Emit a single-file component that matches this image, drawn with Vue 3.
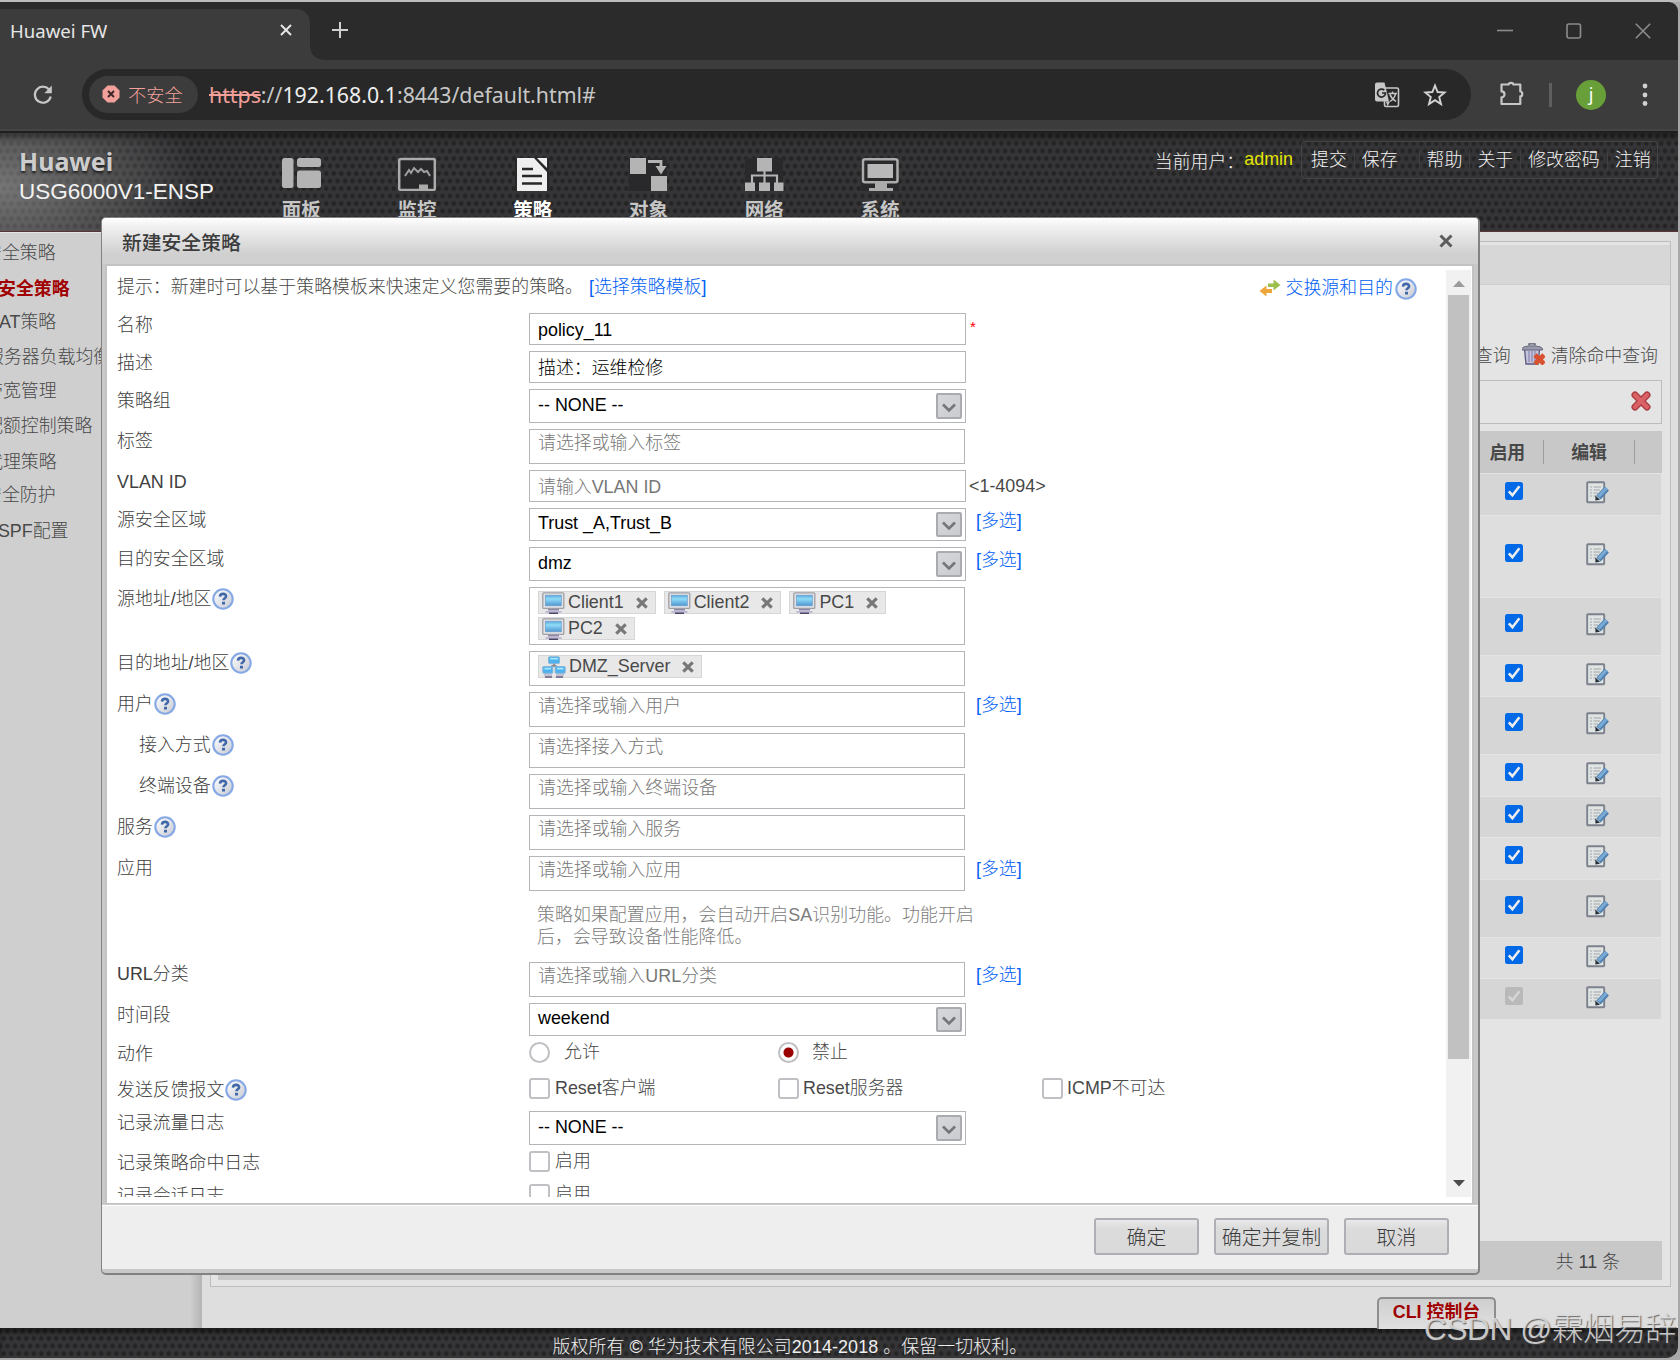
<script setup>
const nav = ['面板', '监控', '策略', '对象', '网络', '系统']
const side = [
  { t: '安全策略', y: 253, x: -16 },
  { t: '安全策略', y: 289, x: -2, on: true },
  { t: 'NAT策略', y: 322, x: -14 },
  { t: '服务器负载均衡', y: 357, x: -14 },
  { t: '带宽管理', y: 391, x: -15 },
  { t: '配额控制策略', y: 426, x: -15 },
  { t: '代理策略', y: 462, x: -15 },
  { t: '安全防护', y: 495, x: -16 },
  { t: 'OSPF配置', y: 531, x: -16 },
].map((s, i, a) => ({ ...s, h: i + 1 < a.length ? a[i + 1].y - s.y : 36 }))
const tableRows = [41, 81, 57, 40, 57, 41, 40, 41, 57, 40, 40]
const rows = [
  { l: '名称', h: 32, k: 'input', v: 'policy_11', star: true },
  { l: '描述', h: 32, k: 'input', v: '描述：运维检修' },
  { l: '策略组', h: 34, k: 'select', v: '-- NONE --' },
  { l: '标签', h: 35, k: 'box', p: '请选择或输入标签' },
  { l: 'VLAN ID', h: 32, k: 'input', p: '请输入VLAN ID', range: '<1-4094>' },
  { l: '源安全区域', h: 33, k: 'select', v: 'Trust _A,Trust_B', multi: true },
  { l: '目的安全区域', h: 34, k: 'select', v: 'dmz', multi: true },
  { l: '源地址/地区', h: 58, k: 'box', q: true, tags: ['Client1', 'Client2', 'PC1', 'PC2'] },
  { l: '目的地址/地区', h: 35, k: 'box', q: true, tags: ['DMZ_Server'] },
  { l: '用户', h: 35, k: 'box', q: true, p: '请选择或输入用户', multi: true },
  { l: '接入方式', h: 35, k: 'box', q: true, sub: true, p: '请选择接入方式' },
  { l: '终端设备', h: 35, k: 'box', q: true, sub: true, p: '请选择或输入终端设备' },
  { l: '服务', h: 35, k: 'box', q: true, p: '请选择或输入服务' },
  { l: '应用', h: 35, k: 'box', p: '请选择或输入应用', multi: true },
  { l: '', h: 59, k: 'note', v: '策略如果配置应用，会自动开启SA识别功能。功能开启后，会导致设备性能降低。' },
  { l: 'URL分类', h: 35, k: 'box', p: '请选择或输入URL分类', multi: true },
  { l: '时间段', h: 33, k: 'select', v: 'weekend' },
  { l: '动作', h: 30, k: 'radio', o: ['允许', '禁止'] },
  { l: '发送反馈报文', h: 27, k: 'check', q: true, o: ['Reset客户端', 'Reset服务器', 'ICMP不可达'] },
  { l: '记录流量日志', h: 34, k: 'select', v: '-- NONE --' },
  { l: '记录策略命中日志', h: 27, k: 'check', o: ['启用'] },
  { l: '记录会话日志', h: 27, k: 'check', o: ['启用'] },
]
</script>

<template>
  <div class="screen">
    <svg class="defs" width="0" height="0">
      <defs>
        <linearGradient id="gHelp" x1="0" y1="0" x2="1" y2="1">
          <stop offset="0" stop-color="#fff" /><stop offset=".5" stop-color="#e3e5ea" /><stop offset="1" stop-color="#c4c7ce" />
        </linearGradient>
        <linearGradient id="gScr" x1="0" y1="0" x2="0" y2="1">
          <stop offset="0" stop-color="#5aa7dc" /><stop offset=".35" stop-color="#8fdcf8" /><stop offset="1" stop-color="#4f95d2" />
        </linearGradient>
        <symbol id="help" viewBox="0 0 22 22">
          <circle cx="11" cy="11" r="9.700" fill="url(#gHelp)" stroke="#86a9e6" stroke-width="2.100" />
          <path d="M8 8.600c.1-2 1.400-2.700 3.100-2.700 1.800 0 3 .8 3 2.300 0 2-2.600 2-2.700 4.100" fill="none" stroke="#4068a8" stroke-width="2.600" />
          <rect x="10" y="13.800" width="3" height="2.700" fill="#4068a8" />
        </symbol>
        <symbol id="pc" viewBox="0 0 23 22">
          <rect x=".8" y=".8" width="21" height="15.600" rx="1" fill="#e4e4e8" stroke="#a0a0a4" stroke-width="1.300" />
          <rect x="3.300" y="3.200" width="16" height="10.600" fill="url(#gScr)" stroke="#6f9fc8" stroke-width=".7" />
          <path d="M6 17h11v1.500H6z" fill="#8f86ab" /><path d="M3.500 19h16v1.800h-16z" fill="#bcb6d2" /><path d="M7 20.500h9V22H7z" fill="#4b4566" />
        </symbol>
        <symbol id="net" viewBox="0 0 24 22">
          <path d="M12 7v4M5 13l7-4 7 4" stroke="#8a8a95" stroke-width="1.600" fill="none" />
          <rect x="6.500" y=".8" width="11" height="6.800" rx="1" fill="#4fb2ee" stroke="#86b4d6" />
          <rect x=".8" y="10.500" width="10" height="6.800" rx="1" fill="#4fb2ee" stroke="#86b4d6" />
          <rect x="13.200" y="10.500" width="10" height="6.800" rx="1" fill="#4fb2ee" stroke="#86b4d6" />
          <path d="M8 2.800h8M2.500 12.600h6.500M15 12.600h6.500" stroke="#a5e6ff" stroke-width="1.600" />
          <path d="M2 19h8M14 19h8" stroke="#b8b3cd" stroke-width="1.600" /><path d="M3 21h7M14 21h7" stroke="#615b80" stroke-width="1.300" />
        </symbol>
        <symbol id="edit" viewBox="0 0 23 23">
          <rect x="1.200" y="1.200" width="17" height="20" rx=".8" fill="#e0e4e2" stroke="#7c818c" stroke-width="1.900" />
          <path d="M4 6h2M4 9h2M4 12h2M4 15h2M7.500 6H15M7.500 9H14M7.500 12H12M7.500 15H10" stroke="#a3a6ad" stroke-width="1.100" />
          <path d="M12.500 16.500 20.800 7.500" stroke="#5080ae" stroke-width="5.800" />
          <path d="M12.700 15.500 20.500 7" stroke="#79a9d5" stroke-width="3.200" />
          <path d="M9.400 19.600v-5l4.600 4.200z" fill="#27303d" />
        </symbol>
      </defs>
    </svg>

    <div class="strip"></div>
    <div class="tabbar">
      <div class="tab"><span>Huawei FW</span>
        <svg width="14" height="14" viewBox="0 0 14 14"><path d="M2 2l10 10M12 2 2 12" stroke="#e6e6e6" stroke-width="2" /></svg>
      </div>
      <svg class="curve" width="16" height="16" viewBox="0 0 16 16"><path d="M0 0Q0 16 16 16H0z" fill="#3c3c3c" /></svg>
      <svg class="plus" width="16" height="16" viewBox="0 0 16 16"><path d="M8 0v16M0 8h16" stroke="#d0d0d0" stroke-width="2" /></svg>
      <div class="winbtns">
        <svg width="16" height="16" viewBox="0 0 16 16"><path d="M0 7.500h16" stroke="#8c8c8c" stroke-width="1.600" /></svg>
        <svg width="16" height="16" viewBox="0 0 16 16"><rect x="1" y="1" width="13.500" height="14" rx="2" fill="none" stroke="#8c8c8c" stroke-width="1.600" /></svg>
        <svg width="16" height="16" viewBox="0 0 16 16"><path d="M.8.8l14.400 14.400M15.200.8.8 15.200" stroke="#8c8c8c" stroke-width="1.600" /></svg>
      </div>
    </div>
    <div class="toolbar">
      <svg class="reload" width="20" height="20" viewBox="0 0 20 20"><path d="M16.500 5.200A8 8 0 1 0 17.700 11.500" fill="none" stroke="#c7c7c7" stroke-width="2.200" /><path d="M18.800.6v7.600h-7.400z" fill="#c7c7c7" /></svg>
      <div class="omni">
        <div class="chip">
          <svg width="18" height="18" viewBox="0 0 18 18"><path d="M5.500.5h7l5 5v7l-5 5h-7l-5-5v-7z" fill="#f2a09a" /><path d="M6 6l6 6M12 6l-6 6" stroke="#3a2626" stroke-width="1.900" /></svg>
          <span>不安全</span>
        </div>
        <div class="url"><s>https</s>://<b>192.168.0.1</b>:8443/default.html#</div>
        <svg class="trans" width="26" height="26" viewBox="0 0 26 26">
          <rect x="10.500" y="6" width="14" height="18.500" rx="1.500" fill="none" stroke="#c7c7c7" stroke-width="1.600" />
          <path d="M3 .6h7.500l4.500 19H3a2 2 0 0 1-2-2v-15a2 2 0 0 1 2-2z" fill="#c7c7c7" /><path d="M12 19.600h4l-2.500 5z" fill="#c7c7c7" />
          <path d="M10.300 8.200A4 4 0 1 0 11.500 11H8" fill="none" stroke="#282828" stroke-width="1.700" />
          <path d="M14.500 11.500h8.500M18.500 9.500v2M21.500 11.800c-.8 3.500-3 6-5.500 7.700M16 12.500c1 3 3 5 6 6.800" fill="none" stroke="#c7c7c7" stroke-width="1.500" />
        </svg>
        <svg class="star" width="24" height="24" viewBox="0 0 24 24"><path d="M12 2.500l2.600 6.500 7 .5-5.400 4.500 1.800 7-6-3.900-6 3.900 1.800-7L2.400 9.500l7-.5z" fill="none" stroke="#d2d2d2" stroke-width="1.900" /></svg>
      </div>
      <svg class="ext" width="26" height="26" viewBox="0 0 26 26"><path d="M3 4.500h6.700a2.300 1.700 0 0 1 4.600 0h7v7a1.900 2.300 0 0 1 0 4.800v7.700H2.500v-6.600a3 3 0 0 0 0-6V4.500z" fill="none" stroke="#c7c7c7" stroke-width="2.200" stroke-linejoin="round" /></svg>
      <i class="vline"></i>
      <div class="avatar">j</div>
      <svg class="dots" width="6" height="24" viewBox="0 0 6 24"><circle cx="3" cy="3" r="2.400" fill="#d0d0d0" /><circle cx="3" cy="12" r="2.400" fill="#d0d0d0" /><circle cx="3" cy="20.500" r="2.400" fill="#d0d0d0" /></svg>
    </div>

    <div class="page">
      <header class="head mesh">
        <div class="brand"><b>Huawei</b><span>USG6000V1-ENSP</span></div>
        <nav class="nav">
          <div v-for="(n, i) in nav" :key="n" class="navitem" :class="{ on: i === 2 }">
            <svg width="40" height="34" viewBox="0 0 40 34">
              <g v-if="i === 0" fill="#b4b4b4"><rect x="1" y="1" width="11.500" height="30" rx="2.500" /><rect x="16" y="1" width="24" height="9" rx="2.500" /><rect x="16" y="13.500" width="24" height="17.500" rx="2.500" /></g>
              <g v-else-if="i === 1"><rect x="2.200" y="2" width="35.600" height="31" rx="1.500" fill="#28282a" stroke="#ababab" stroke-width="2.500" /><path d="M8 19l4-6 2 3 3-5 4 4 3-3 3 3 3-1 3 5" fill="none" stroke="#9e9e9e" stroke-width="2" /><rect x="22" y="27.500" width="9" height="6" fill="#ababab" /></g>
              <g v-else-if="i === 2"><rect x="3" y="1" width="34" height="33" fill="#28282a" /><path d="M5 1h17l13 14v19H5z" fill="#efefef" /><path d="M25 1h10v10z" fill="#efefef" /><path d="M10 12h11M10 19h20M10 26.500h20" stroke="#28282a" stroke-width="2.600" /></g>
              <g v-else-if="i === 3"><rect x="1" y="1" width="38" height="33" fill="#29292b" /><rect x="2" y="1" width="16" height="16" fill="#b4b4b4" /><rect x="23" y="19" width="16" height="15" fill="#b4b4b4" /><path d="M20 4.500h13v6" fill="none" stroke="#b4b4b4" stroke-width="2.800" /><path d="M27.500 9h11l-5.500 8.500z" fill="#b4b4b4" /></g>
              <g v-else-if="i === 4"><rect x="1" y="1" width="38" height="33" fill="#29292b" /><g fill="#b4b4b4"><rect x="13" y="1" width="15" height="13.500" /><rect x="1" y="25.500" width="10" height="8.500" /><rect x="15" y="25.500" width="11" height="8.500" /><rect x="30" y="25.500" width="9.500" height="8.500" /></g><path d="M20.500 14v12M8 26v-7.500h25V26" fill="none" stroke="#b4b4b4" stroke-width="2.200" /></g>
              <g v-else><rect x="1" y="1" width="38" height="33" fill="#29292b" /><rect x="3" y="2.200" width="34.500" height="23" rx="2" fill="#29292b" stroke="#ababab" stroke-width="2.500" /><rect x="7.500" y="7" width="25.500" height="14" fill="#b8b8b8" /><path d="M15 26h12v5h6v3H9v-3h6z" fill="#ababab" /></g>
            </svg>
            <span>{{ n }}</span>
          </div>
        </nav>
        <div class="user"><span class="cur">当前用户：</span><em>admin</em>
          <div class="menu"><a>提交</a><a class="save">保存</a><a>帮助</a><a>关于</a><a>修改密码</a><a>注销</a></div>
        </div>
      </header>

      <div class="body">
        <aside class="side">
          <div v-for="(s, i) in side" :key="i" class="sitem" :class="{ on: s.on }" :style="{ height: s.h + 'px', textIndent: s.x + 'px' }">{{ s.t }}</div>
        </aside>
        <main class="main">
          <div class="panel">
            <div class="pband"></div>
            <div class="ops"><span>命中查询</span>
              <svg width="23" height="22" viewBox="0 0 23 22"><path d="M2.500 6h15l-1.300 15H4z" fill="#c5c3dc" stroke="#5c5a7d" stroke-width="1.300" /><path d="M7 8v11M10 8v11M13 8v11" stroke="#8f8cb4" stroke-width="1.300" /><path d="M0 5.500C1 2 19 2 20.500 5.500V7H0z" fill="#9a9aae" stroke="#62627a" /><path d="M7 2.500V.8h6v1.700" fill="none" stroke="#54546c" stroke-width="1.300" /><path d="M13 12l9 9M22 12l-9 9" stroke="#d9522f" stroke-width="4.800" /></svg>
              <span>清除命中查询</span></div>
            <div class="search"><svg width="20" height="20" viewBox="0 0 20 20"><path d="M4 4l12 12M16 4 4 16" stroke="#a93a40" stroke-width="7" stroke-linecap="round" /><path d="M4 4l12 12M16 4 4 16" stroke="#da6266" stroke-width="4.400" stroke-linecap="round" /></svg></div>
            <div class="thead"><b class="c1">启用</b><i></i><b class="c2">编辑</b><i></i></div>
            <div v-for="(h, i) in tableRows" :key="i" class="trow" :class="{ alt: i % 2 }" :style="{ height: h + 'px' }">
              <svg class="ck" width="18" height="18" viewBox="0 0 18 18"><rect width="18" height="18" rx="2.500" :fill="i === 10 ? '#b9b9b9' : '#0069e8'" /><path d="M3.800 9.300l3.600 3.900 7-9" fill="none" :stroke="i === 10 ? '#d6d6d6' : '#ededed'" stroke-width="2.500" /></svg>
              <svg class="ed" width="23" height="23"><use href="#edit" /></svg>
            </div>
            <div class="fill"></div>
            <div class="tfoot">共 11 条</div>
          </div>
          <div class="cli">CLI 控制台</div>
        </main>
      </div>
      <footer class="foot mesh">版权所有 © 华为技术有限公司2014-2018 。保留一切权利。</footer>
    </div>
    <div class="endstrip"></div>

    <section class="dialog">
      <div class="dtitle"><span>新建安全策略</span>
        <svg width="14" height="14" viewBox="0 0 14 14"><path d="M1.500 1.500l11 11M12.500 1.500l-11 11" stroke="#5c5c5c" stroke-width="3" /></svg>
      </div>
      <div class="dbody">
        <div class="form">
          <div class="hint"><span>提示：新建时可以基于策略模板来快速定义您需要的策略。</span><a>[选择策略模板]</a>
            <div class="swap">
              <svg width="22" height="18" viewBox="0 0 22 18"><path d="M9 4.500h5.500V.5L21.500 6l-7 5.500V8H9z" fill="#9dc04c" /><path d="M13 10H7.500V6.500L.5 12l7 5.500V14H13z" fill="#eda63a" /></svg>
              <a>交换源和目的</a><svg class="q" width="22" height="22"><use href="#help" /></svg>
            </div>
          </div>
          <div v-for="(r, i) in rows" :key="i" class="row" :style="{ height: r.h + 'px' }">
            <div class="label" :class="{ sub: r.sub }">{{ r.l }}<svg v-if="r.q" class="q" width="22" height="22"><use href="#help" /></svg></div>
            <div v-if="r.k === 'input'" class="input" :class="{ ph: r.p }">{{ r.v || r.p }}</div>
            <div v-else-if="r.k === 'select'" class="input select" :class="{ short: r.h === 33 }"><span>{{ r.v }}</span>
              <i><svg width="14" height="10" viewBox="0 0 14 10"><path d="M1 1.500l6 6 6-6" fill="none" stroke="#737578" stroke-width="2.600" /></svg></i></div>
            <div v-else-if="r.k === 'box'" class="input box">
              <span v-if="r.p" class="ph">{{ r.p }}</span>
              <div v-for="t in r.tags" :key="t" class="tag">
                <svg v-if="t === 'DMZ_Server'" width="24" height="22"><use href="#net" /></svg>
                <svg v-else width="23" height="22"><use href="#pc" /></svg>
                <span>{{ t }}</span>
                <svg class="tx" width="12" height="12" viewBox="0 0 12 12"><path d="M1.300 1.300l9.400 9.400M10.700 1.300l-9.400 9.400" stroke="#777" stroke-width="3.100" /></svg>
              </div>
            </div>
            <div v-else-if="r.k === 'note'" class="note">{{ r.v }}</div>
            <div v-else class="opts" :class="r.k">
              <div v-for="(o, j) in r.o" :key="o" class="opt"><i :class="{ sel: r.k === 'radio' && j === 1 }"></i><span>{{ o }}</span></div>
            </div>
            <em v-if="r.star" class="req">*</em>
            <span v-if="r.range" class="range">{{ r.range }}</span>
            <a v-if="r.multi" class="multi">[多选]</a>
          </div>
        </div>
        <div class="sbar">
          <svg width="12" height="8" viewBox="0 0 12 8"><path d="M0 7h12L6 .5z" fill="#9c9c9c" /></svg>
          <div class="thumb"></div>
          <svg width="12" height="8" viewBox="0 0 12 8"><path d="M0 1h12L6 7.500z" fill="#4c4c4c" /></svg>
        </div>
      </div>
      <div class="dfoot"><button>确定</button><button class="wide">确定并复制</button><button>取消</button></div>
    </section>
    <div class="wm">CSDN @霖烟易辞</div>
  </div>
</template>

<style>
body { margin: 0; overflow: hidden; }
</style>
<style scoped>
* { box-sizing: border-box; }
.screen { position: relative; width: 1680px; height: 1360px; overflow: hidden; background: #a9a9a9; font: 17.9px "Liberation Sans", "Noto Sans CJK SC", sans-serif; color: #484848; white-space: nowrap; }
svg { display: block; flex: none; }
.defs { position: absolute; }
.strip { height: 2px; background: #bdbdbd; }
.tabbar { width: 1678px; height: 58px; background: #2b2b2b; border-radius: 0 9px 0 0; display: flex; align-items: flex-end; }
.tab { width: 310px; height: 51px; background: #3c3c3c; border-radius: 0 14px 0 0; display: flex; align-items: center; justify-content: space-between; padding: 0 17px 9px 10px; font: 18.600px "Noto Sans", sans-serif; color: #e6e6e6; }
.plus { margin: 0 0 22px 6px; }
.winbtns { margin-left: auto; margin-right: 27px; display: flex; gap: 53px; margin-bottom: 21px; }
.toolbar { width: 1678px; height: 71px; background: #3c3c3c; border-bottom: 2px solid #444; display: flex; align-items: flex-start; }
.reload { margin: 25px 0 0 33px; }
.omni { margin: 9px 0 0 29px; width: 1389px; height: 51px; border-radius: 26px; background: #282828; display: flex; align-items: center; }
.chip { margin-left: 7px; width: 109px; height: 37px; border-radius: 19px; background: #3c3c3c; display: flex; align-items: center; padding: 0 0 1px 13px; gap: 8px; color: #f2a09a; font-size: 18.200px; font-weight: 300; }
.url { margin-left: 11px; font: 21.300px "Noto Sans", sans-serif; color: #c7c7c7; width: 1165px; padding-bottom: 1px; }
.url b { font-weight: 400; color: #eee; }
.url s { color: #f2a09a; }
.star { margin-left: 23px; }
.ext { margin: 20px 0 0 28px; }
.vline { width: 3px; height: 24px; background: #5f5f5f; margin: 23px 0 0 24px; }
.avatar { margin: 20px 0 0 24px; width: 30px; height: 30px; border-radius: 50%; background: #689f38; color: #fff; font: 18px/29px "Noto Sans", sans-serif; text-align: center; }
.dots { margin: 23px 0 0 36px; }
.page { width: 1678px; height: 1227px; overflow: hidden; border-radius: 0 0 12px 0; }
.mesh { background-color: #353537; background-image: radial-gradient(circle at center, #242425 1.900px, transparent 2.700px), radial-gradient(circle at center, #242425 1.900px, transparent 2.700px); background-size: 7.500px 15px; background-position: 0 3px, 3.750px 10.500px; }
.head { height: 101px; display: flex; color: #f2f2f2; border-top: 2px solid #1f1f1f; border-bottom: 1px solid #5b3236;
  background-image: linear-gradient(180deg, rgba(0,0,0,.35), transparent 10px), radial-gradient(ellipse 200px 110px at 0 55%, rgba(170,170,170,.55), transparent), radial-gradient(circle at center, #242425 1.900px, transparent 2.700px), radial-gradient(circle at center, #242425 1.900px, transparent 2.700px);
  background-size: auto, auto, 7.500px 15px, 7.500px 15px; background-position: 0 0, 0 0, 0 3px, 3.750px 10.500px; }
.brand { width: 243px; padding: 12px 0 0 19px; display: flex; flex-direction: column; }
.brand b { font: 700 25px/32px "Noto Sans", sans-serif; color: #cdcdcd; text-shadow: 0 2px 2px #222; }
.brand span { font-size: 22.500px; line-height: 28px; margin-top: 1px; }
.nav { display: flex; }
.navitem { width: 115.750px; display: flex; flex-direction: column; align-items: center; padding-top: 24px; }
.navitem span { font-weight: 700; font-size: 19.500px; line-height: 28px; margin: 5px 0 0 1px; color: #c6c6c6; }
.navitem.on span { color: #fff; }
.user { margin-left: auto; margin-right: 20px; display: flex; padding-top: 7px; height: 46px; align-items: center; font-weight: 300; }
.user em { font-style: normal; color: #e4e600; margin-right: 8px; }
.menu { height: 38px; width: 357px; border: 1px solid #444; border-radius: 4px; display: flex; align-items: center; padding: 0 0 0 2px; }
.cur { margin-bottom: -1px; }
.menu a { padding: 0 7px; border-right: 1px solid #3f3f3f; line-height: 20px; }
.menu a.save { padding-right: 21px; }
.menu a:last-child { border: 0; }
.body { height: 1096px; display: flex; background: #dedede; }
.side { width: 202px; background: linear-gradient(90deg, transparent 190px, #b4b4b4 202px), #cfcfcf; padding-top: 8px; border-top: 1px solid #e4e4e4; font-weight: 300; overflow: hidden; }
.sitem { line-height: 24px; }
.sitem.on { color: #a00000; font-weight: 700; }
.main { width: 1476px; padding: 9px 0 0 8px; }
.panel { width: 1461px; height: 1046px; border: 1px solid #bdbdbd; background: #e4e4e4; padding: 3px 8px 6px 7px; display: flex; flex-direction: column; }
.pband { height: 40px; margin: 0 -8px 0 -7px; background: #d7d7d7; border-bottom: 1px solid #cfcfcf; flex: none; }
.ops { height: 95px; flex: none; display: flex; justify-content: flex-end; padding: 43px 4px 0 0; font-weight: 300; gap: 6px; align-items: center; }
.ops svg { margin-left: 5px; }
.search { height: 44px; flex: none; border: 1px solid #bcbcbc; display: flex; justify-content: flex-end; align-items: center; padding: 0 10px 2px 0; }
.thead { height: 42px; margin: 7px 0 1px; background: #c8c8c8; flex: none; display: flex; justify-content: flex-end; align-items: center; padding-right: 27px; }
.thead b { margin-top: -2px; }
.thead i { width: 1px; height: 24px; background: #9e9e9e; }
.thead .c1 { margin-right: 18px; }
.thead .c2 { margin-right: 27px; margin-left: 27px; }
.trow { margin-right: 1px; margin-bottom: 1px; background: #d6d6d6; flex: none; display: flex; justify-content: flex-end; align-items: center; padding-right: 52px; }
.trow.alt { background: #dedede; }
.ck { margin-right: 63px; margin-bottom: 7px; }
.ed { margin-bottom: 4px; }
.fill { flex: 1; }
.tfoot { height: 39px; background: #c8c8c8; text-align: right; padding-right: 42px; line-height: 43px; color: #444; font-weight: 300; }
.cli { margin: 10px 0 0 1167px; width: 119px; height: 32px; border: 2px solid #8e8e8e; border-bottom: 0; border-radius: 5px 5px 0 0; background: linear-gradient(#cfcfcf, #e0e0e0); color: #a00000; font-weight: 700; text-align: center; line-height: 26px; }
.foot { height: 30px; padding-left: 552.500px; line-height: 38px; letter-spacing: .1px; color: #f0f0f0; font-weight: 300; box-shadow: inset 0 5px 5px rgba(0,0,0,.4); }
.endstrip { height: 2px; background: #a9a9a9; }

.dialog { position: absolute; left: 101px; top: 217px; width: 1379px; height: 1058px; border: 1px solid #828282; border-width: 1px 2px 2px 1px; border-radius: 5px; background: #c9c9c9; overflow: hidden; display: flex; flex-direction: column; }
.dtitle { height: 46px; background: linear-gradient(#fff 0, #f1f1f1 8px, #d0d0d0 36px, #cfcfcf); display: flex; justify-content: space-between; align-items: center; padding: 0 25px 0 20px; font-size: 19.800px; color: #3c3c3c; font-weight: 500; }
.dbody { height: 940px; margin: 0 4px 0 3px; border: 2px solid #c3c3c3; border-bottom-width: 1px; background: #fff; display: flex; padding: 4px 1px 6px 10px; }
.form { flex: 1; height: 927px; overflow: hidden; font-weight: 300; }
.hint { height: 43px; display: flex; line-height: 34px; letter-spacing: .03px; }
.hint a, .multi { color: #0060f5; }
.hint > a { margin-left: 6px; }
.swap { margin-left: auto; margin-right: 29px; display: flex; align-items: center; height: 36px; }
.swap a { margin: 0 1px 0 4px; }
.row { display: flex; margin-bottom: 6px; }
.label { width: 412px; line-height: 24px; height: 24px; display: flex; color: #404040; flex: none; }
.label.sub { padding-left: 22px; }
.q { margin: 1px 0 0 1px; }
.input { width: 437px; flex: none; border: 1px solid #b4b5b9; padding-left: 8px; color: #000; line-height: 32px; background: #fff; height: 100%; }
.input.ph, .ph { color: #777; }
.select { display: flex; justify-content: space-between; line-height: 30px; padding-right: 3px; }
.select.short { line-height: 28px; }
.select i { width: 26px; margin: 3px 0; background: linear-gradient(135deg, #d6d7d9, #cbccd0); border: 2px solid #aaabb0; border-radius: 2px; display: flex; align-items: center; justify-content: center; }
.select i svg { margin-top: 3px; }
.box { width: 436px; display: flex; flex-wrap: wrap; align-content: flex-start; gap: 3px 8px; padding-top: 3px; line-height: 22px; }
.box .ph { margin-top: -1px; }
.tag { height: 23px; border: 1px solid #d6d6d6; background: #e8e8e8; display: flex; padding: 0 7px 0 3px; color: #484848; line-height: 21px; }
.tag span { margin-left: 3px; }
.tag .tx { margin: 5px 0 0 12px; }
.note { width: 450px; padding: 8px 0 0 8px; line-height: 21.500px; color: #7c7c7c; white-space: normal; letter-spacing: .06px; }
.opts { display: flex; }
.opt { display: flex; width: 249px; height: 21px; flex: none; line-height: 20px; }
.opt:nth-child(2) { width: 264px; }
.opt i { width: 21px; height: 21px; border: 2px solid #bfc0c4; border-radius: 3px; flex: none; background: #fff; }
.opt span { margin-left: 5px; }
.opt + .opt span { margin-left: 4px; }
.radio .opt span { margin-left: 14px; }
.radio .opt + .opt span { margin-left: 13px; }
.radio i { border-radius: 50%; }
.radio i.sel { background: radial-gradient(circle, #9a0000 4.500px, #fff 5.500px); }
.req { font: 15px/28px "Liberation Sans", sans-serif; color: #f00; margin-left: 4px; }
.range { margin-left: 3px; line-height: 32px; }
.multi { margin-left: 10px; line-height: 27px; }
.box + .multi { margin-left: 11px; }
.sbar { width: 25px; background: #f1f1f1; display: flex; flex-direction: column; align-items: center; padding: 10px 0; }
.thumb { width: 21px; height: 764px; margin: 7px 0 auto; background: #c1c1c1; }
.dfoot { height: 64px; margin-top: 1px; background: #eee; border-top: 1px solid #fff; display: flex; justify-content: flex-end; padding: 12px 29px 0 0; gap: 15px; }
.dfoot button { width: 105px; height: 37px; padding: 0; border: 2px solid #aeafb5; border-radius: 3px; background: linear-gradient(#e9e9e9, #dcdcdc 8px, #d9d9d9); font: 300 19.900px "Liberation Sans", "Noto Sans CJK SC", sans-serif; color: #3c3c3c; }
.dfoot .wide { width: 115px; }
.wm { position: absolute; left: 1424px; top: 1308px; font-size: 31.500px; line-height: 42px; letter-spacing: -.35px; font-weight: 300; color: rgba(225,225,225,.85); text-shadow: 1px 1px 1px rgba(70,70,70,.8); }
</style>
